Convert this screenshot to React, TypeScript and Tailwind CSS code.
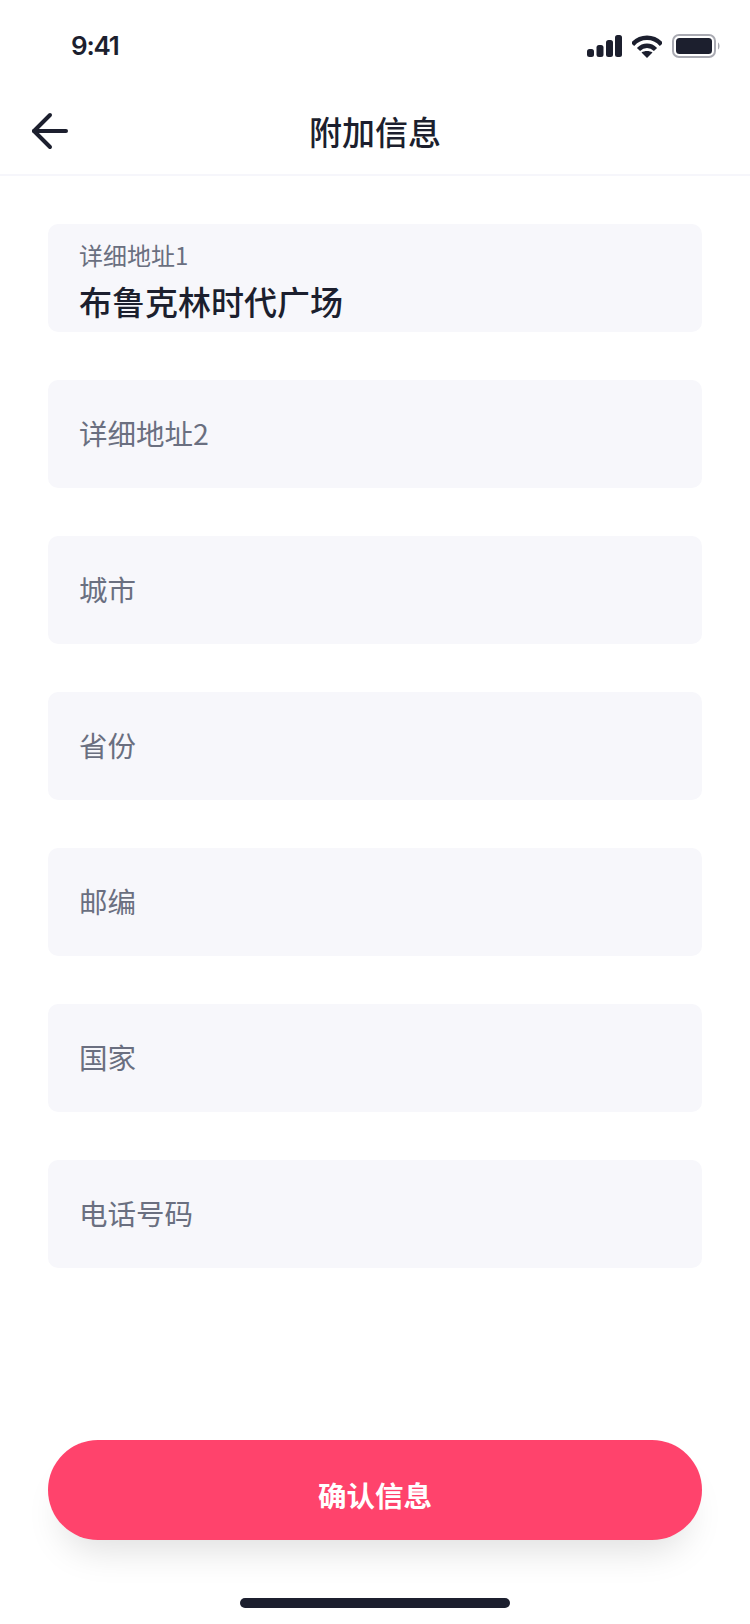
const font = "font-['Noto_Sans_CJK_SC','Noto_Sans',sans-serif]";

function Field({ label }: { label: string }) {
  return (
    <div className="h-[108px] rounded-[10px] bg-[#f7f7fb] pl-[32px] pb-[2px] flex items-center">
      <span className="text-[28.5px] leading-[40px] -ml-[1px] text-[#6a6f80] font-normal">{label}</span>
    </div>
  );
}

export default function App() {
  return (
    <div className={`${font} w-[750px] h-[1624px] bg-white flex flex-col overflow-hidden`}>
      <div className="h-[88px] flex items-center justify-between pl-[71px] pr-[29px] shrink-0">
        <span className="font-['Inter',sans-serif] font-semibold text-[26px] tracking-[-1.2px] leading-none text-[#1c1f2e] mt-[3px]">9:41</span>
        <div className="flex items-center gap-[10px] mt-[4px]">
          <svg width="35" height="22" viewBox="0 0 35 22" fill="#1c1f2e">
            <rect x="0" y="14" width="7" height="8" rx="2.5" />
            <rect x="9.5" y="10" width="7" height="12" rx="2.5" />
            <rect x="19" y="5" width="7" height="17" rx="2.5" />
            <rect x="28" y="0" width="7" height="22" rx="2.5" />
          </svg>
          <svg width="30" height="23" viewBox="0 0 30 23" fill="none" stroke="#1c1f2e" strokeWidth="4.5">
            <path d="M0.5 8.5 C8.5 -0.5 21.5 -0.5 29.5 8.5" transform="translate(0 1)" />
            <path d="M6.5 14.5 C11.5 9.5 18.5 9.5 23.5 14.5" />
            <path d="M15 23 L9.5 17.5 C12.5 15.5 17.5 15.5 20.5 17.5 Z" fill="#1c1f2e" stroke="none" />
          </svg>
          <svg width="49" height="24" viewBox="0 0 49 24" fill="none">
            <rect x="1" y="1" width="42" height="22" rx="6" stroke="#a9aab2" strokeWidth="2" />
            <rect x="4" y="4" width="36" height="16" rx="3.5" fill="#1c1f2e" />
            <path d="M46 8.5 C48 9.5 48 14.5 46 15.5 Z" fill="#a9aab2" />
          </svg>
        </div>
      </div>

      <div className="h-[88px] shrink-0 border-b-2 border-[#f6f6fb] flex items-center justify-center relative">
        <svg className="absolute left-[31px] top-[24px]" width="38" height="38" viewBox="0 0 38 38" fill="none" stroke="#1c1f2e" strokeWidth="4" strokeLinecap="round" strokeLinejoin="round">
          <path d="M35 19H3" />
          <path d="M19 3L3 19L19 35" />
        </svg>
        <span className="text-[33px] leading-[44px] font-medium text-[#1c1f2e]">附加信息</span>
      </div>

      <div className="flex flex-col gap-[48px] px-[48px] pt-[48px]">
        <div className="h-[108px] rounded-[10px] bg-[#f7f7fb] pl-[32px] flex flex-col">
          <span className="text-[24px] leading-[32px] mt-[15px] -ml-[1px] text-[#6a6f80] font-normal">详细地址1</span>
          <span className="text-[33px] leading-[44px] mt-[8px] -ml-[1px] text-[#1c1f2e] font-medium">布鲁克林时代广场</span>
        </div>
        <Field label="详细地址2" />
        <Field label="城市" />
        <Field label="省份" />
        <Field label="邮编" />
        <Field label="国家" />
        <Field label="电话号码" />
      </div>

      <div className="mt-auto px-[48px] flex flex-col items-center">
        <button className="w-full h-[100px] rounded-[50px] bg-[#ff436c] text-white text-[28.5px] font-bold pt-[10px] shadow-[0_24px_36px_-14px_rgba(0,0,0,0.13)] flex items-center justify-center">
          确认信息
        </button>
        <div className="mt-[58px] mb-[16px] w-[270px] h-[10px] rounded-full bg-[#1c1f2e]" />
      </div>
    </div>
  );
}
